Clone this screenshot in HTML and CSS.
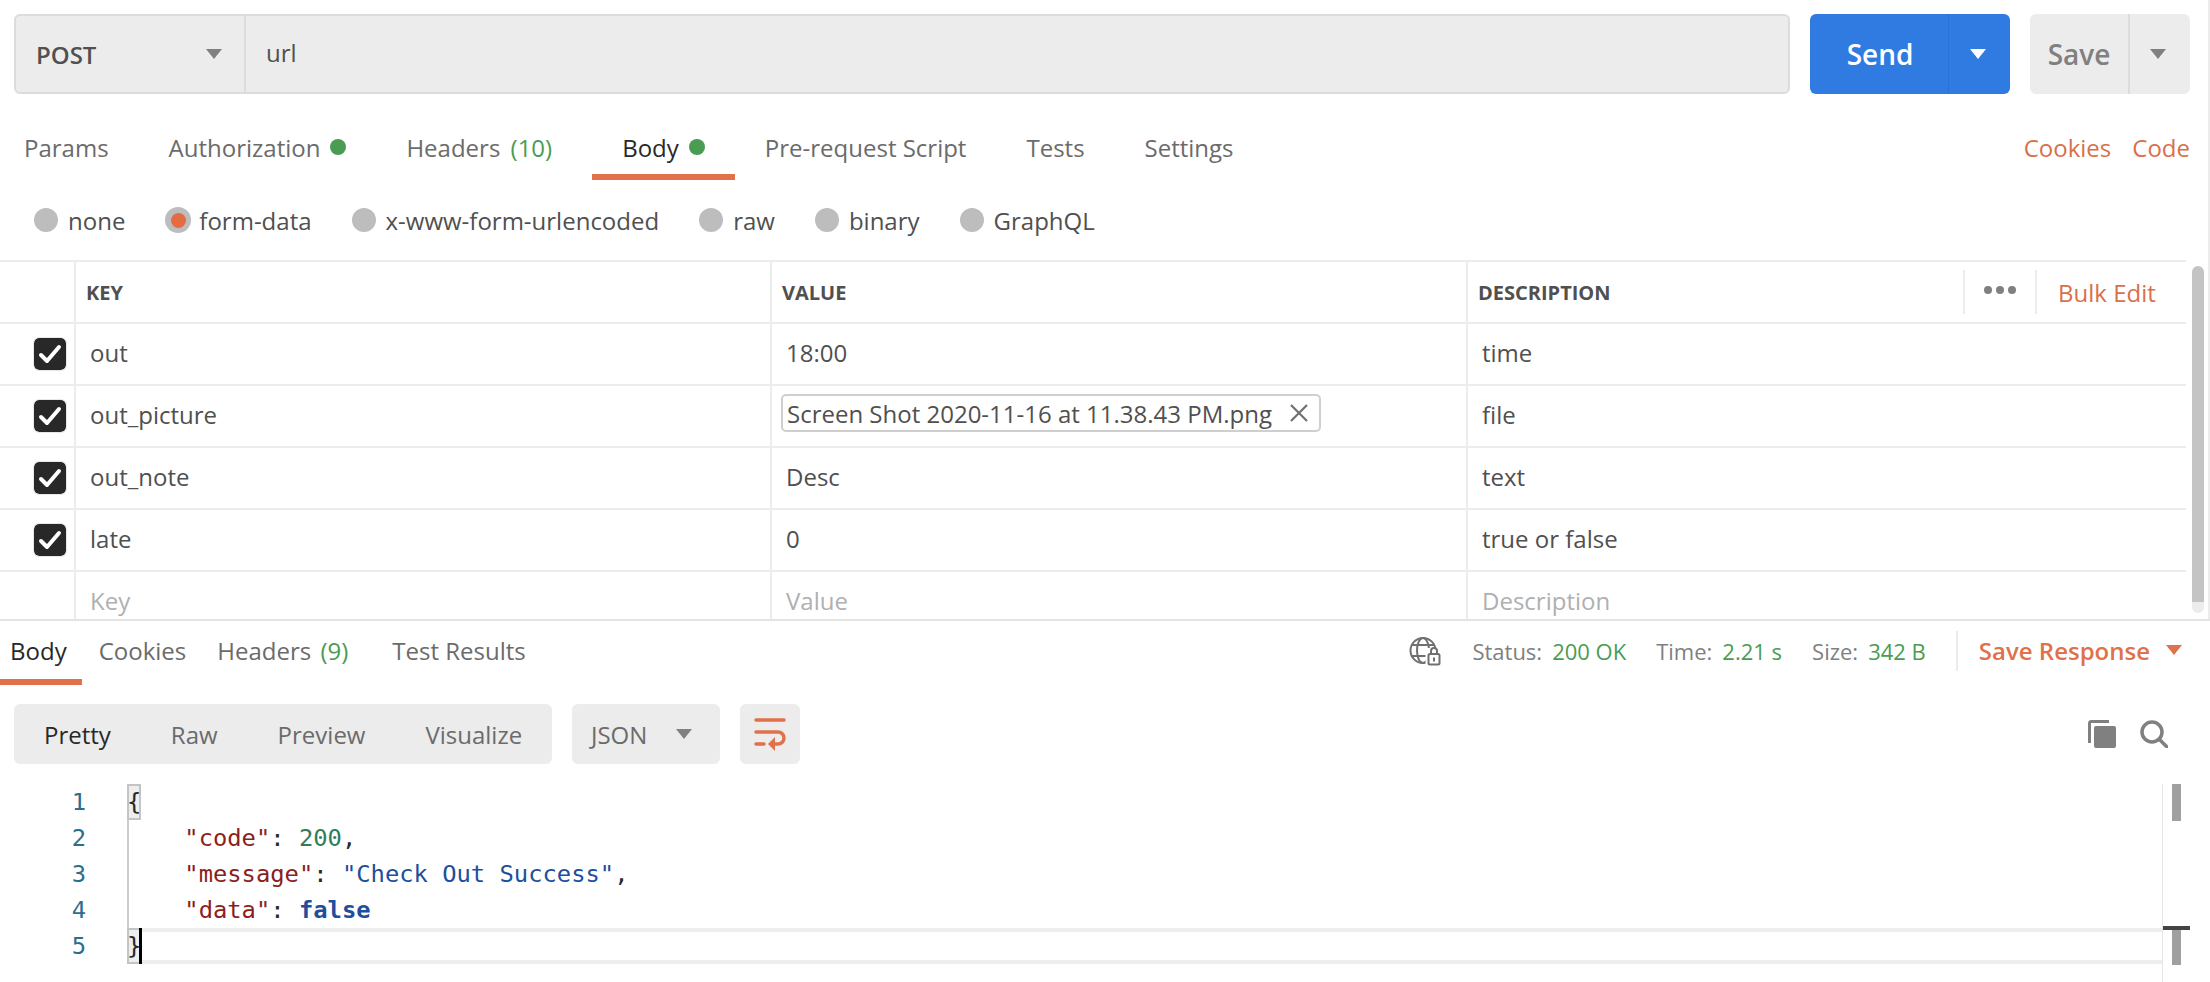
FILE: index.html
```html
<!DOCTYPE html>
<html lang="en">
<head>
<meta charset="utf-8">
<title>Postman request</title>
<link rel="stylesheet" href="styles.css">
</head>
<body>
<div class="request-pane">
  <div class="request-bar">
    <div class="url-box">
      <div class="method"><span>POST</span><i class="caret caret-grey"></i></div>
      <div class="url">url</div>
    </div>
    <div class="send-btn">
      <div class="send-label">Send</div>
      <div class="send-arrow"><i class="caret caret-white"></i></div>
    </div>
    <div class="save-btn">
      <div class="save-label">Save</div>
      <div class="save-arrow"><i class="caret caret-grey"></i></div>
    </div>
  </div>

  <div class="req-tabs">
    <div class="req-tab first">Params</div>
    <div class="req-tab">Authorization<i class="dot"></i></div>
    <div class="req-tab extra">Headers <span class="green count">(10)</span></div>
    <div class="req-tab active">Body<i class="dot"></i></div>
    <div class="req-tab">Pre-request Script</div>
    <div class="req-tab">Tests</div>
    <div class="req-tab">Settings</div>
    <div class="req-links"><span>Cookies</span><span>Code</span></div>
  </div>

  <div class="body-types">
    <div class="radio-item"><i class="radio"></i>none</div>
    <div class="radio-item"><i class="radio on"></i>form-data</div>
    <div class="radio-item"><i class="radio"></i>x-www-form-urlencoded</div>
    <div class="radio-item"><i class="radio"></i>raw</div>
    <div class="radio-item"><i class="radio"></i>binary</div>
    <div class="radio-item"><i class="radio"></i>GraphQL</div>
  </div>

  <div class="table-wrap">
    <div class="kv-table">
      <div class="kv-row head">
        <div class="cell check"></div>
        <div class="cell">KEY</div>
        <div class="cell">VALUE</div>
        <div class="cell desc-head">
          <span>DESCRIPTION</span>
          <div class="head-tools">
            <div class="more"><i></i><i></i><i></i></div>
            <div class="bulk">Bulk Edit</div>
          </div>
        </div>
      </div>
      <div class="kv-row">
        <div class="cell check"><svg class="box" viewBox="0 0 32 32"><rect width="32" height="32" rx="5" fill="#282828"/><path d="M7 17l6 6L25 9" fill="none" stroke="#fff" stroke-width="4" stroke-linecap="round" stroke-linejoin="round"/></svg></div>
        <div class="cell text">out</div>
        <div class="cell text">18:00</div>
        <div class="cell text">time</div>
      </div>
      <div class="kv-row">
        <div class="cell check"><svg class="box" viewBox="0 0 32 32"><rect width="32" height="32" rx="5" fill="#282828"/><path d="M7 17l6 6L25 9" fill="none" stroke="#fff" stroke-width="4" stroke-linecap="round" stroke-linejoin="round"/></svg></div>
        <div class="cell text">out_picture</div>
        <div class="cell text file-cell">
          <div class="chip"><span>Screen Shot 2020-11-16 at 11.38.43 PM.png</span><svg class="chip-x" viewBox="0 0 20 20"><path d="M2 2l16 16M18 2L2 18" fill="none" stroke="#707070" stroke-width="2.200"/></svg></div>
        </div>
        <div class="cell text">file</div>
      </div>
      <div class="kv-row">
        <div class="cell check"><svg class="box" viewBox="0 0 32 32"><rect width="32" height="32" rx="5" fill="#282828"/><path d="M7 17l6 6L25 9" fill="none" stroke="#fff" stroke-width="4" stroke-linecap="round" stroke-linejoin="round"/></svg></div>
        <div class="cell text">out_note</div>
        <div class="cell text">Desc</div>
        <div class="cell text">text</div>
      </div>
      <div class="kv-row">
        <div class="cell check"><svg class="box" viewBox="0 0 32 32"><rect width="32" height="32" rx="5" fill="#282828"/><path d="M7 17l6 6L25 9" fill="none" stroke="#fff" stroke-width="4" stroke-linecap="round" stroke-linejoin="round"/></svg></div>
        <div class="cell text">late</div>
        <div class="cell text">0</div>
        <div class="cell text">true or false</div>
      </div>
      <div class="kv-row placeholder">
        <div class="cell check"></div>
        <div class="cell text">Key</div>
        <div class="cell text">Value</div>
        <div class="cell text">Description</div>
      </div>
    </div>
    <div class="table-scroll"><div class="thumb"></div></div>
  </div>
</div>

<div class="response-pane">
  <div class="res-header">
    <div class="res-tab active">Body</div>
    <div class="res-tab tight">Cookies</div>
    <div class="res-tab extra">Headers <span class="green count">(9)</span></div>
    <div class="res-tab">Test Results</div>
    <div class="res-status">
      <svg class="globe" viewBox="0 0 32 30"><g fill="none" stroke="#707070" stroke-width="2"><circle cx="14" cy="14.500" r="12.500"/><ellipse cx="14" cy="14.500" rx="6" ry="12.500"/><path d="M3 9h22M3 20h22"/></g><rect x="16.500" y="12" width="15.500" height="18" fill="#fff"/><g fill="none" stroke="#707070" stroke-width="2"><rect x="19.500" y="18" width="11" height="10.500" rx="1.500"/><path d="M22 18v-3a3 3 0 0 1 6 0v3"/></g><rect x="24" y="21.500" width="2" height="4" fill="#707070"/></svg>
      <span class="stat-label">Status:</span><span class="stat-val s1">200 OK</span>
      <span class="stat-label">Time:</span><span class="stat-val s2">2.21 s</span>
      <span class="stat-label">Size:</span><span class="stat-val s3">342 B</span>
      <div class="save-res"><span>Save Response</span><i class="caret caret-orange"></i></div>
    </div>
  </div>

  <div class="res-toolbar">
    <div class="view-group">
      <div class="view active">Pretty</div>
      <div class="view">Raw</div>
      <div class="view">Preview</div>
      <div class="view">Visualize</div>
    </div>
    <div class="format"><span>JSON</span><i class="caret caret-grey"></i></div>
    <div class="wrap-btn">
      <svg viewBox="0 0 32 32" class="wrap-icon"><g fill="none" stroke="#e0714a" stroke-width="3.500" stroke-linecap="round"><path d="M2 2h28M2 14h22a6 6 0 0 1 0 12h-5M2 26h8"/></g><path d="M14 26l7-7v14z" fill="#e0714a"/></svg>
    </div>
    <div class="res-tools">
      <svg class="copy" viewBox="0 0 28 28"><path d="M1.500 23V3A1.500 1.500 0 0 1 3 1.500H21" fill="none" stroke="#808080" stroke-width="3"/><rect x="6" y="6" width="22" height="22" rx="2" fill="#808080"/></svg>
      <svg class="search" viewBox="0 0 28 28"><circle cx="12" cy="12" r="10" fill="none" stroke="#808080" stroke-width="3.500"/><path d="M19 19l8 8" stroke="#808080" stroke-width="3.500" stroke-linecap="round"/></svg>
    </div>
  </div>

  <div class="editor">
    <div class="gutter"><div>1</div><div>2</div><div>3</div><div>4</div><div>5</div></div>
    <div class="code">
      <div class="line"><span class="bracket">{</span></div>
      <div class="line guide">    <span class="k">"code"</span>: <span class="n">200</span>,</div>
      <div class="line guide">    <span class="k">"message"</span>: <span class="s">"Check Out Success"</span>,</div>
      <div class="line guide">    <span class="k">"data"</span>: <span class="b">false</span></div>
      <div class="line current"><span class="bracket">}</span><i class="cursor"></i></div>
    </div>
    <div class="overview">
      <div class="ov-thumb top"></div>
      <div class="ov-mark"></div>
      <div class="ov-thumb low"></div>
    </div>
  </div>
</div>
</body>
</html>
```

FILE: styles.css
```css
* { box-sizing: border-box; }
html, body { margin: 0; padding: 0; }
body {
  width: 2210px;
  height: 982px;
  overflow: hidden;
  background: #fff;
  font-family: "Open Sans", "Noto Sans", sans-serif;
  font-size: 24px;
  color: #505050;
}
i { display: block; font-style: normal; }
.green { color: #4a9c52; }

.caret { width: 0; height: 0; border-style: solid; border-width: 10px 8px 0 8px; border-color: transparent; }
.caret-grey { border-top-color: #808080; }
.caret-white { border-top-color: #fff; }
.caret-orange { border-top-color: #e0714a; }

.request-pane { height: 619px; border-right: 2px solid #ececec; overflow: hidden; }

.request-bar { display: flex; padding: 14px 0 0 14px; height: 94px; }
.url-box {
  display: flex; width: 1776px; height: 80px;
  background: #ececec; border: 2px solid #dcdcdc; border-radius: 6px;
}
.method {
  width: 230px; border-right: 2px solid #dcdcdc;
  display: flex; align-items: center; justify-content: space-between;
  padding: 0 22px 0 20px;
  font-weight: 600; color: #505050;
}
.url { padding: 0 0 4px 20px; display: flex; align-items: center; color: #505050; }
.send-btn {
  display: flex; width: 200px; height: 80px; margin-left: 20px;
  background: #2f7be2; border-radius: 6px; color: #fff;
}
.send-label { width: 138px; display: flex; align-items: center; justify-content: center; font-size: 28px; font-weight: 600; padding-left: 2px; }
.send-arrow { flex: 1; border-left: 1px solid #2b72d4; display: flex; align-items: center; justify-content: center; padding-right: 4px; }
.save-btn { display: flex; width: 160px; height: 80px; margin-left: 20px; background: #ececec; border-radius: 6px; color: #808080; }
.save-label { width: 98px; display: flex; align-items: center; justify-content: center; font-size: 28px; font-weight: 600; }
.save-arrow { flex: 1; border-left: 2px solid #dcdcdc; display: flex; align-items: center; justify-content: center; padding-right: 5px; }

.req-tabs { display: flex; height: 86px; padding-top: 14px; width: 2190px; }
.req-tab {
  display: flex; align-items: center; white-space: pre;
  height: 72px; padding: 12px 30px 0; color: #6b6b6b;
  border-bottom: 6px solid transparent;
}
.req-tab.first { padding-left: 24px; }
.req-tab.extra { margin-right: 10px; }
.req-tab.active { color: #282828; border-bottom-color: #e0714a; }
.req-tab .dot { width: 16px; height: 16px; margin-left: 10px; border-radius: 50%; background: #4a9c52; }
.req-tab .count { margin-left: 4px; }
.req-links { margin-left: auto; display: flex; gap: 21px; align-items: center; height: 66px; padding-top: 12px; color: #d9704a; }

.body-types { display: flex; align-items: center; height: 80px; padding: 0 0 0 34px; }
.radio-item { display: flex; align-items: center; color: #505050; margin-right: 40px; }
.radio { width: 24px; height: 24px; border-radius: 50%; background: #bdbdbd; margin-right: 10px; }
.radio.on { width: 26px; height: 26px; margin-right: 8px; display: flex; align-items: center; justify-content: center; }
.radio.on::after { content: ""; width: 15px; height: 15px; border-radius: 50%; background: #e46c43; }

.table-wrap { display: flex; }
.kv-table { width: 2186px; border-top: 2px solid #ececec; }
.kv-row {
  display: grid; grid-template-columns: 76px 696px 696px 1fr;
  height: 62px; border-bottom: 2px solid #ececec;
}
.kv-row.placeholder { height: 48px; border-bottom: 0; overflow: hidden; }
.kv-row.placeholder .cell { height: 60px; color: #b0b0b0; }
.cell { display: flex; align-items: center; padding-left: 10px; border-right: 2px solid #ececec; }
.cell:last-child { border-right: 0; }
.check { padding-left: 34px; }
.box { width: 32px; height: 32px; box-shadow: 0 0 0 1px #e8e8e8; border-radius: 5px; }
.head .cell { font-size: 20px; font-weight: 700; color: #505050; }
.desc-head { justify-content: space-between; }
.head-tools { display: flex; height: 44px; align-items: stretch; }
.more {
  width: 74px; border-left: 2px solid #ececec; border-right: 2px solid #ececec;
  display: flex; align-items: center; justify-content: center; gap: 4px; padding-bottom: 4px;
}
.more i { width: 8px; height: 8px; border-radius: 50%; background: #808080; }
.head .bulk { display: flex; align-items: center; width: 149px; padding-left: 21px; font-size: 24px; font-weight: 400; color: #d9704a; }
.text { padding-left: 14px; padding-bottom: 4px; }
.file-cell { padding-left: 9px; padding-bottom: 0; }
.chip {
  display: flex; align-items: center; width: 540px; height: 38px;
  border: 2px solid #cfcfcf; border-radius: 5px; padding-left: 4px; margin-bottom: 6px;
}
.chip span { flex: 1; white-space: pre; }
.chip-x { width: 20px; height: 20px; margin-right: 10px; }
.table-scroll { width: 22px; padding: 6px 4px 0 6px; }
.thumb { width: 12px; height: 347px; border-radius: 6px; background: linear-gradient(#c4c4c4 336px, #ececec 336px); }

.response-pane { border-top: 2px solid #e4e4e4; height: 363px; }
.res-header { display: flex; height: 64px; }
.res-tab {
  display: flex; align-items: center; white-space: pre; height: 64px;
  padding: 0 17px; color: #6b6b6b; border-bottom: 6px solid transparent;
}
.res-tab.active { padding-left: 10px; padding-right: 15px; color: #282828; border-bottom-color: #e0714a; }
.res-tab.tight { padding-right: 14px; }
.res-tab.extra { margin-right: 10px; }
.res-tab .count { margin-left: 3px; }
.res-status { margin-left: auto; display: flex; align-items: center; height: 60px; font-size: 22px; color: #808080; padding-right: 28px; }
.globe { width: 32px; height: 30px; margin-right: 31px; }
.stat-label { margin-right: 10px; }
.stat-val { color: #4a9c52; }
.s1 { margin-right: 30px; }
.s2 { margin-right: 30px; }
.save-res {
  display: flex; align-items: center; margin-left: 30px; padding: 0 0 2px 21px; height: 40px;
  border-left: 2px solid #ececec; color: #e0714a; font-size: 24px; font-weight: 600;
}
.save-res .caret { margin-left: 16px; }

.res-toolbar { display: flex; height: 60px; margin: 19px 0 0 14px; align-items: stretch; }
.view-group { display: flex; width: 538px; background: #ececec; border-radius: 6px; padding-left: 30px; }
.view { display: flex; align-items: center; color: #6b6b6b; margin-right: 60px; }
.view.active { color: #282828; }
.format { display: flex; align-items: center; justify-content: space-between; width: 148px; margin-left: 20px; background: #ececec; border-radius: 6px; padding: 0 28px 0 19px; color: #6b6b6b; }
.wrap-btn { display: flex; align-items: center; justify-content: center; width: 60px; margin-left: 20px; background: #ececec; border-radius: 6px; }
.wrap-icon { width: 32px; height: 32px; overflow: visible; }
.res-tools { display: flex; margin-left: auto; align-items: center; gap: 24px; padding: 0 42px 0 0; height: 60px; }
.copy, .search { width: 28px; height: 28px; }

.editor { display: flex; height: 198px; margin-top: 20px; font-family: "DejaVu Sans Mono", "Liberation Mono", monospace; font-size: 23.8px; }
.gutter { width: 127px; padding-right: 41px; text-align: right; color: #2d6e8e; }
.gutter div { height: 36px; line-height: 36px; }
.code { width: 2035px; }
.line { position: relative; height: 36px; line-height: 36px; white-space: pre; color: #282828; }
.guide { box-shadow: inset 2px 0 0 #cccccc; }
.bracket { display: inline-block; height: 36px; background: #eeeeee; box-shadow: inset 0 0 0 2px #c4c4c4; }
.current { border-top: 4px solid #eeeeee; border-bottom: 4px solid #eeeeee; line-height: 28px; }
.current .bracket { margin-top: -4px; vertical-align: top; line-height: 36px; }
.cursor { position: absolute; left: 12px; top: -4px; width: 3px; height: 36px; background: #000; }
.k { color: #8b1e1e; }
.n { color: #2e7d5b; }
.s { color: #1c4f9c; }
.b { color: #1c4f9c; font-weight: 700; }
.overview { position: relative; width: 28px; border-left: 1px solid #e4e4e4; padding-left: 9px; }
.ov-thumb { width: 9px; background: #a0a0a0; }
.ov-thumb.top { height: 37px; }
.ov-mark { position: absolute; left: 0; top: 142px; width: 27px; height: 4px; background: #444; }
.ov-thumb.low { height: 36px; margin-top: 108px; }
```
